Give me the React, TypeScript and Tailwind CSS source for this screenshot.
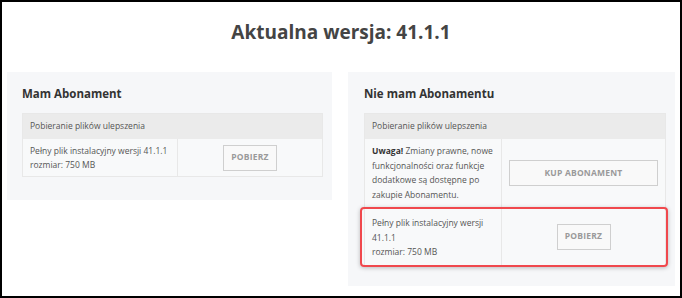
import React from 'react';

function Button({ label, wide }: { label: string; wide?: boolean }) {
  return (
    <div
      className={`flex h-[26px] items-center justify-center border-[1.5px] border-[#cfcfcf] bg-[#f9f9f9] text-[8.5px] font-bold tracking-[0.2px] text-[#9a9a9a] ${
        wide ? 'w-[149px]' : 'w-[54px]'
      }`}
    >
      {label}
    </div>
  );
}

export default function App() {
  return (
    <div
      className="h-[298px] w-[682px] border-2 border-black bg-white text-[#555]"
      style={{ fontFamily: '"Open Sans", sans-serif' }}
    >
      {/* Title */}
      <h1 className="pt-[17px] text-center text-[19px] font-bold leading-[26px] text-[#444]">
        Aktualna wersja: 41.1.1
      </h1>

      <div className="mt-[27px] flex items-start gap-4 px-[5px]">
        {/* Left card */}
        <div className="w-[325px] bg-[#f6f7f9] pb-[23px] pl-[15px] pr-[9px] pt-[13px]">
          <h2 className="mb-[11px] text-[11.5px] font-bold leading-[17px] text-[#333]">Mam Abonament</h2>
          <div className="border border-[#e8e8e8] bg-[#f8f9fa]">
            <div className="flex h-[25px] items-center bg-[#ebebeb] px-[7px] text-[8.5px]">
              Pobieranie plików ulepszenia
            </div>
            <div className="flex h-[37px]">
              <div className="w-[155px] border-r border-[#e8e8e8] px-[7px] pt-[5px] text-[8.5px] leading-[14px]">
                Pełny plik instalacyjny wersji 41.1.1
                <br />
                rozmiar: 750 MB
              </div>
              <div className="flex flex-1 items-center justify-center">
                <Button label="POBIERZ" />
              </div>
            </div>
          </div>
        </div>

        {/* Right card */}
        <div className="w-[327px] bg-[#f6f7f9] pb-[20px] pl-4 pr-[9px] pt-[13px]">
          <h2 className="mb-[11px] text-[11.5px] font-bold leading-[17px] text-[#333]">Nie mam Abonamentu</h2>
          <div className="border border-[#e8e8e8] bg-[#f8f9fa]">
            <div className="flex h-[25px] items-center bg-[#ebebeb] px-[7px] text-[8.5px]">
              Pobieranie plików ulepszenia
            </div>
            <div className="flex h-[69px] border-b border-[#e8e8e8]">
              <div className="w-[137px] border-r border-[#e8e8e8] px-[7px] pt-[5px] text-[8.5px] leading-[14.5px]">
                <span className="font-bold text-[#333]">Uwaga! </span>
                Zmiany prawne, nowe funkcjonalności oraz funkcje dodatkowe są dostępne po zakupie Abonamentu.
              </div>
              <div className="flex flex-1 items-center justify-center">
                <Button label="KUP ABONAMENT" wide />
              </div>
            </div>
            <div className="relative flex h-[57px]">
              <div className="w-[137px] border-r border-[#e8e8e8] px-[7px] pt-[8px] text-[8.5px] leading-[14.5px]">
                Pełny plik instalacyjny wersji 41.1.1
                <br />
                rozmiar: 750 MB
              </div>
              <div className="flex flex-1 items-center justify-center">
                <Button label="POBIERZ" />
              </div>
              <div className="pointer-events-none absolute -bottom-[2px] -left-[5px] -right-[3px] -top-[1px] rounded-[4px] border-2 border-[#f0484d] shadow-[0_1px_4px_rgba(0,0,0,0.25)]" />
            </div>
          </div>
        </div>
      </div>
    </div>
  );
}
